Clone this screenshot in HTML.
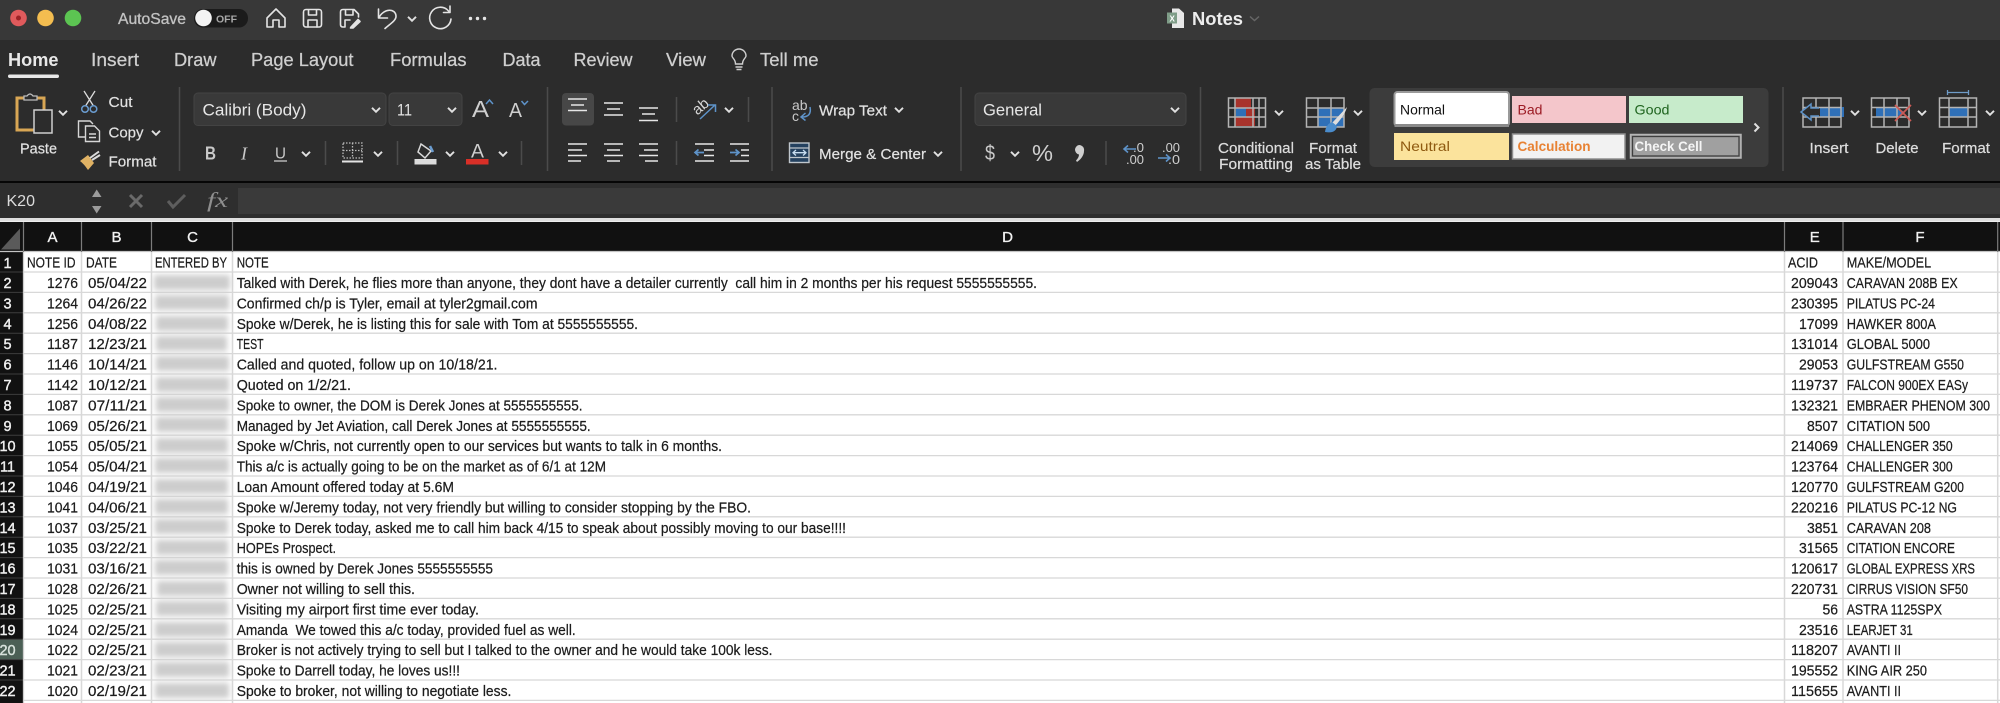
<!DOCTYPE html>
<html><head><meta charset="utf-8"><title>Notes</title>
<style>
html,body{margin:0;padding:0;width:2000px;height:703px;overflow:hidden;background:#fff}
svg{display:block;filter:blur(.35px)}
text{font-family:"Liberation Sans",sans-serif}
.t{font-size:18px;fill:#cfcfcf;stroke:#cfcfcf;stroke-width:.25px}
.r{font-size:15px;fill:#e2e2e2;stroke:#e2e2e2;stroke-width:.2px}
.c{font-size:14.5px;fill:#1c1c1c;stroke:#1c1c1c;stroke-width:.22px}
.h{font-size:15px;fill:#f2f2f2;stroke:#f2f2f2;stroke-width:.35px;text-anchor:middle}
.n{font-size:14.5px;fill:#f0f0f0;stroke:#f0f0f0;stroke-width:.4px;text-anchor:middle}
.l{stroke:#dcdcdc;stroke-width:1.5;fill:none}
.g{stroke:#b4b4b4;stroke-width:1.5;fill:none}
.s{stroke:#4b4b4b;stroke-width:1.5}
</style></head><body>
<svg xmlns="http://www.w3.org/2000/svg" width="2000" height="703" viewBox="0 0 2000 703">
<defs>
<path id="v" d="M-4 -2.2 L0 1.8 L4 -2.2" fill="none" stroke="#e0e0e0" stroke-width="1.9"/>
<filter id="bl" x="-10%" y="-10%" width="120%" height="120%"><feGaussianBlur stdDeviation="2.8"/></filter>
</defs>
<!-- chrome backgrounds -->
<rect width="2000" height="41" fill="#383838"/>
<rect y="40" width="2000" height="142" fill="#2c2c2c"/>
<rect y="181" width="2000" height="2.4" fill="#060606"/>
<rect y="183" width="2000" height="36" fill="#2e2e2e"/>
<rect x="238" y="188" width="1762" height="26" fill="#3a3a3a"/>
<rect y="218" width="2000" height="3.5" fill="#dedede"/>
<!-- traffic lights -->
<circle cx="18.500" cy="18" r="8.300" fill="#e05a5c"/><circle cx="18.500" cy="18" r="2.500" fill="#9c2226"/>
<circle cx="45.500" cy="18" r="8.300" fill="#f4bd50"/>
<circle cx="73" cy="18" r="8.300" fill="#5cc452"/>
<text x="118" y="24" font-size="15.500" fill="#c2c2c2" stroke="#c2c2c2" stroke-width=".3" textLength="68" lengthAdjust="spacingAndGlyphs">AutoSave</text>
<rect x="194" y="9" width="54" height="18.500" rx="9" fill="#1b1b1b"/>
<circle cx="203.500" cy="18" r="8.300" fill="#f4f4f4"/>
<text x="216" y="22.500" font-size="10.500" fill="#a9a9a9" font-weight="bold" textLength="21" lengthAdjust="spacingAndGlyphs">OFF</text>
<!-- QAT icons -->
<g fill="none" stroke="#e4e4e4" stroke-width="1.600" stroke-linejoin="round" stroke-linecap="round">
<path d="M267 18 L276 9 L285 18 V27 H279 V20 H273 V27 H267Z"/>
<rect x="303.500" y="9.500" width="18" height="17.500" rx="2.500"/><path d="M308.500 10 V15 H316.500 V10 M308 27 V20 H317 V27"/>
<path d="M345 27 H343 Q340.500 27 340.500 24.500 V12 Q340.500 9.500 343 9.500 H354 L358.500 14 V17 M345.500 10 V15 H353 V10 M345 27 V20 H350"/>
<path d="M351 27 L358 19.500 L360 21.500 L353 28 L350.500 28Z" fill="#e4e4e4"/>
<path d="M378.500 9 V18 H387.500 M379 17.500 C384 8 396 8 396 16.500 C396 20.500 390 24 385 28.500"/>
<path d="M448.500 11 A10.700 10.700 0 1 0 451 19 M450 6 V12.500 H443.500"/>
</g>
<use href="#v" x="412" y="19"/>
<circle cx="470.500" cy="18.500" r="1.700" fill="#e4e4e4"/><circle cx="477.500" cy="18.500" r="1.700" fill="#e4e4e4"/><circle cx="484.500" cy="18.500" r="1.700" fill="#e4e4e4"/>
<!-- title -->
<path d="M1172 8.500 H1179 L1184 13 V28 H1172Z" fill="#e8e8e8"/><rect x="1167" y="12.500" width="10" height="11" fill="#7f9d88"/>
<text x="1169.500" y="21.500" font-size="8" fill="#fff" font-weight="bold">X</text>
<text x="1192" y="25" font-size="18" fill="#ededed" font-weight="bold" textLength="51" lengthAdjust="spacingAndGlyphs">Notes</text>
<path d="M1250 16.500 L1254.500 20.500 L1259 16.500" fill="none" stroke="#666" stroke-width="1.500"/>
<!-- tabs -->
<text x="8" y="66" class="t" style="font-weight:bold;fill:#e8e8e8;stroke-width:0" textLength="50.500" lengthAdjust="spacingAndGlyphs">Home</text>
<rect x="8" y="74.500" width="51" height="3.500" rx="1.700" fill="#e8e8e8"/>
<text x="91" y="66" class="t" textLength="48" lengthAdjust="spacingAndGlyphs">Insert</text>
<text x="174" y="66" class="t" textLength="42.500" lengthAdjust="spacingAndGlyphs">Draw</text>
<text x="251" y="66" class="t" textLength="102.500" lengthAdjust="spacingAndGlyphs">Page Layout</text>
<text x="390" y="66" class="t" textLength="76.500" lengthAdjust="spacingAndGlyphs">Formulas</text>
<text x="502.500" y="66" class="t" textLength="38" lengthAdjust="spacingAndGlyphs">Data</text>
<text x="573.500" y="66" class="t" textLength="59" lengthAdjust="spacingAndGlyphs">Review</text>
<text x="666" y="66" class="t" textLength="40" lengthAdjust="spacingAndGlyphs">View</text>
<g fill="none" stroke="#cfcfcf" stroke-width="1.400"><path d="M735.500 64 C735.500 59 732 58 732 56 A7 7 0 1 1 746 56 C746 58 742.500 59 742.500 64Z"/><path d="M735.500 67 H742.500 M736.500 69.500 H741.500"/></g>
<text x="760" y="66" class="t" textLength="58.500" lengthAdjust="spacingAndGlyphs">Tell me</text>
<!-- separators -->
<g class="s"><path d="M179.500 87 V171 M547.500 87 V171 M772 87 V171 M961 87 V171 M1200.500 87 V171 M1783 87 V171"/>
<path d="M325.500 141 V165 M397.500 141 V165 M521.500 141 V165 M676.500 97 V122 M676.500 141 V165 M748.500 97 V122 M1106 141 V165"/></g>
<!-- clipboard group -->
<rect x="17" y="98" width="27" height="32" fill="none" stroke="#d8a654" stroke-width="3"/>
<path d="M24 100 V96 H27 Q30 92 33 96 H37 V100 Z" fill="#2c2c2c" stroke="#bdbdbd" stroke-width="1.300"/>
<rect x="34" y="110" width="18" height="23" fill="#2c2c2c" stroke="#cfcfcf" stroke-width="1.500"/>
<use href="#v" x="63" y="113"/>
<text x="20" y="153.500" class="r" textLength="37" lengthAdjust="spacingAndGlyphs">Paste</text>
<g fill="none" stroke="#dcdcdc" stroke-width="1.300"><path d="M84 91 L93.500 106 M95 91 L85.500 106"/></g>
<g fill="none" stroke="#6a9cd0" stroke-width="1.500"><circle cx="85" cy="109" r="3.300"/><circle cx="93.500" cy="109" r="3.300"/></g>
<text x="108.500" y="107" class="r" textLength="24" lengthAdjust="spacingAndGlyphs">Cut</text>
<g fill="none" stroke="#d6d6d6" stroke-width="1.400"><path d="M86 137 H78.500 V121 H90 L93 124"/><path d="M85.500 126 H94.500 L99.500 131 V141.500 H85.500Z"/><path d="M89 134 H96 M89 137.500 H96"/></g>
<text x="108.500" y="137.500" class="r" textLength="35" lengthAdjust="spacingAndGlyphs">Copy</text>
<use href="#v" x="156" y="133"/>
<path d="M80 161 L88 155 L94 163 L88 170 Q84 164 80 161Z" fill="#e0b264"/>
<path d="M90 158 L99 151.500 M92 160 L100 155" stroke="#dcdcdc" stroke-width="2" fill="none"/>
<text x="108.500" y="166.500" class="r" textLength="48" lengthAdjust="spacingAndGlyphs">Format</text>
<!-- font group -->
<rect x="194" y="93" width="192" height="32.500" rx="4" fill="#393939" stroke="#434343"/>
<text x="202.500" y="115.500" font-size="17" fill="#e6e6e6" textLength="104" lengthAdjust="spacingAndGlyphs">Calibri (Body)</text>
<use href="#v" x="376" y="110"/>
<rect x="389" y="93" width="73" height="32.500" rx="4" fill="#393939" stroke="#434343"/>
<text x="397" y="115.500" font-size="17" fill="#e6e6e6" textLength="15" lengthAdjust="spacingAndGlyphs">11</text>
<use href="#v" x="452" y="110"/>
<text x="472" y="117" font-size="23" fill="#cfcfcf" textLength="17" lengthAdjust="spacingAndGlyphs">A</text>
<path d="M486 104 L489.500 100 L493 104" fill="none" stroke="#5e93c9" stroke-width="1.500"/>
<text x="509" y="117" font-size="20" fill="#cfcfcf" textLength="13" lengthAdjust="spacingAndGlyphs">A</text>
<path d="M521.500 101 L524.500 104.500 L528 101" fill="none" stroke="#5e93c9" stroke-width="1.500"/>
<text x="205" y="159.500" font-size="18" font-weight="bold" fill="#c9c9c9" textLength="11" lengthAdjust="spacingAndGlyphs">B</text>
<text x="241" y="159.500" font-size="18" font-style="italic" fill="#c9c9c9" style="font-family:'Liberation Serif',serif">I</text>
<text x="275" y="158.500" font-size="16" fill="#c9c9c9" textLength="11" lengthAdjust="spacingAndGlyphs">U</text>
<path d="M274 161 H287" stroke="#c9c9c9" stroke-width="1.300"/>
<use href="#v" x="306" y="154"/>
<path d="M343 143 H362 V158 H343Z M352.500 143 V158 M343 150.500 H362" fill="none" stroke="#bbb" stroke-width="1.300" stroke-dasharray="1.500 1.500"/>
<path d="M342 161.500 H363" stroke="#e4e4e4" stroke-width="2"/>
<use href="#v" x="378" y="154"/>
<path d="M421 144 L431 151 L425 158 L418 152Z" fill="none" stroke="#d8d8d8" stroke-width="1.500"/>
<path d="M430 146 L433 152" stroke="#6a9cd0" stroke-width="2.500"/>
<rect x="414.500" y="159" width="22" height="5.500" fill="#dcdcdc"/>
<use href="#v" x="450" y="154"/>
<text x="471" y="157.500" font-size="19" fill="#cfcfcf" textLength="13" lengthAdjust="spacingAndGlyphs">A</text>
<rect x="466" y="159" width="22.500" height="5.500" fill="#d92f27"/>
<use href="#v" x="503" y="154"/>
<!-- alignment group -->
<rect x="562" y="93" width="32" height="32.500" rx="4" fill="#474747"/>
<g class="l" style="stroke:#e6e6e6;stroke-width:1.400">
<path d="M568 99 H587 M571 105 H584 M568 110.500 H587"/>
<path d="M604 103 H623 M607 109 H620 M604 115 H623"/>
<path d="M639 108 H658 M642 114 H655 M639 120.500 H658"/>
<path d="M568 144 H587 M568 150 H582 M568 155.500 H587 M568 161 H581"/>
<path d="M604 144 H623 M607 150 H620 M604 155.500 H623 M607 161 H620"/>
<path d="M639 144 H658 M644 150 H658 M639 155.500 H658 M645 161 H658"/>
<path d="M695 144 H714 M704 150 H714 M704 155.500 H714 M695 161 H714"/>
<path d="M730 144 H749 M741 150 H749 M741 155.500 H749 M730 161 H749"/>
</g>
<path d="M704 152.500 H695 M698.500 149.500 L695 152.500 L698.500 155.500" fill="none" stroke="#5e93c9" stroke-width="1.700"/>
<path d="M730 152.500 H739 M735.500 149.500 L739 152.500 L735.500 155.500" fill="none" stroke="#5e93c9" stroke-width="1.700"/>
<text x="693" y="112" font-size="15" fill="#d6d6d6" transform="rotate(-40 700 108)">ab</text>
<path d="M700 119 L715 105 M708 105 H715.500 V112" fill="none" stroke="#5e93c9" stroke-width="1.500"/>
<use href="#v" x="729" y="110"/>
<text x="792" y="110" font-size="14" fill="#c9c9c9">ab</text><text x="792" y="121" font-size="14" fill="#c9c9c9">c</text>
<path d="M810 107 Q812 117 802 117 M805.500 113 L801 117 L805.500 120.500" fill="none" stroke="#5e93c9" stroke-width="1.500"/>
<text x="819" y="115.500" class="r" textLength="68" lengthAdjust="spacingAndGlyphs">Wrap Text</text>
<use href="#v" x="899" y="110"/>
<rect x="789.500" y="143" width="19.500" height="19.500" fill="#24415f" stroke="#bfc6cc" stroke-width="1.400"/>
<path d="M790 148 H809 M790 157.500 H809" stroke="#bfc6cc" stroke-width="1.200"/>
<path d="M793 152.700 H806 M796 150 L793 152.700 L796 155.500 M803 150 L806 152.700 L803 155.500" fill="none" stroke="#c7ddf0" stroke-width="1.300"/>
<text x="819" y="159" class="r" textLength="107" lengthAdjust="spacingAndGlyphs">Merge &amp; Center</text>
<use href="#v" x="938" y="154"/>
<!-- number group -->
<rect x="975" y="93" width="211" height="32.500" rx="4" fill="#393939" stroke="#434343"/>
<text x="983" y="115.500" font-size="17" fill="#e6e6e6" textLength="59" lengthAdjust="spacingAndGlyphs">General</text>
<use href="#v" x="1175" y="110"/>
<text x="985" y="160" font-size="21" fill="#c9c9c9" textLength="10" lengthAdjust="spacingAndGlyphs">$</text>
<use href="#v" x="1015" y="154"/>
<text x="1032" y="161" font-size="23" fill="#cfcfcf" textLength="21" lengthAdjust="spacingAndGlyphs">%</text>
<path d="M1079 145 a5 5 0 0 1 5 6 c0 5 -4 9 -7 11 l-1 -1.500 c2 -2 3 -4 3 -6 a5 5 0 0 1 -4 -5 a5 5 0 0 1 4 -4.500z" fill="#cfcfcf"/>
<text x="1133" y="152" font-size="13" fill="#cfcfcf" textLength="11" lengthAdjust="spacingAndGlyphs">.0</text>
<text x="1126" y="164" font-size="13" fill="#cfcfcf" textLength="18" lengthAdjust="spacingAndGlyphs">.00</text>
<path d="M1136 149 H1124 M1128 145.500 L1124 149 L1128 152.500" fill="none" stroke="#5e93c9" stroke-width="1.600"/>
<text x="1162" y="152" font-size="13" fill="#cfcfcf" textLength="18" lengthAdjust="spacingAndGlyphs">.00</text>
<text x="1168" y="164" font-size="13" fill="#cfcfcf" textLength="12" lengthAdjust="spacingAndGlyphs">.0</text>
<path d="M1158 158 H1170 M1166 154.500 L1170 158 L1166 161.500" fill="none" stroke="#5e93c9" stroke-width="1.600"/>
<!-- conditional -->
<rect x="1235" y="98" width="16" height="10" fill="#a8332c"/><rect x="1235" y="117" width="20" height="9" fill="#a8332c"/><rect x="1246" y="108" width="9" height="9" fill="#a8332c"/><rect x="1236" y="108" width="10" height="9" fill="#2f70b8"/>
<path d="M1228.500 98 H1265.500 V127 H1228.500Z M1235 98 V127 M1253 98 V127 M1259 98 V127 M1228.500 108 H1265.500 M1228.500 117 H1265.500" class="g"/>
<use href="#v" x="1279" y="113"/>
<text x="1218" y="153" class="r" style="fill:#dcdcdc" textLength="76" lengthAdjust="spacingAndGlyphs">Conditional</text>
<text x="1219" y="169" class="r" style="fill:#dcdcdc" textLength="74" lengthAdjust="spacingAndGlyphs">Formatting</text>
<rect x="1318" y="108" width="26" height="19" fill="#2f70b8"/>
<path d="M1306.500 98 H1344 V127 H1306.500Z M1318 98 V127 M1331 98 V127 M1306.500 108 H1344 M1306.500 117 H1344" class="g"/>
<path d="M1347 107 L1332 123 L1335 126 Q1345 115 1347 107Z" fill="#ddd"/>
<path d="M1332 122 Q1326 124 1325 132 Q1336 134 1337 126Z" fill="#4a8ccc"/>
<use href="#v" x="1358" y="113"/>
<text x="1309" y="153" class="r" style="fill:#dcdcdc" textLength="48" lengthAdjust="spacingAndGlyphs">Format</text>
<text x="1305" y="169" class="r" style="fill:#dcdcdc" textLength="56" lengthAdjust="spacingAndGlyphs">as Table</text>
<!-- styles -->
<rect x="1369.500" y="88" width="399" height="79" rx="5" fill="#3c3c3c"/>
<rect x="1394.500" y="92" width="114.500" height="34" rx="3" fill="#fff" stroke="#9a9a9a" stroke-width="2"/>
<path d="M1394.500 125.500 H1509" stroke="#8a8a8a" stroke-width="3"/>
<text x="1400" y="114.500" font-size="14" fill="#111" textLength="45" lengthAdjust="spacingAndGlyphs">Normal</text>
<rect x="1512" y="96" width="114" height="27" fill="#f4c6cb"/>
<text x="1517.500" y="114.500" font-size="14" fill="#9c1c25" textLength="25" lengthAdjust="spacingAndGlyphs">Bad</text>
<rect x="1629" y="96" width="114" height="27" fill="#c7ebcb"/>
<text x="1634.500" y="114.500" font-size="14" fill="#1f641f" textLength="35" lengthAdjust="spacingAndGlyphs">Good</text>
<rect x="1394" y="133" width="115" height="27" fill="#fbe39c"/>
<text x="1400" y="151" font-size="14" fill="#8f5a10" textLength="50" lengthAdjust="spacingAndGlyphs">Neutral</text>
<rect x="1512.500" y="134" width="112.500" height="25" fill="#f2f2f2" stroke="#8f8f8f" stroke-width="1.500"/>
<text x="1517.500" y="151" font-size="14" fill="#e88233" font-weight="bold" textLength="73" lengthAdjust="spacingAndGlyphs">Calculation</text>
<rect x="1630.500" y="134.500" width="110.500" height="23.500" fill="#a0a0a0" stroke="#b5b5b5" stroke-width="1.500"/>
<rect x="1632.500" y="136.500" width="106.500" height="19.500" fill="none" stroke="#3f3f3f" stroke-width="1.300"/>
<text x="1634.500" y="151" font-size="14" fill="#f5f5f5" font-weight="bold" textLength="68" lengthAdjust="spacingAndGlyphs">Check Cell</text>
<path d="M1754.500 123.500 L1758.500 127.500 L1754.500 131.500" fill="none" stroke="#e0e0e0" stroke-width="2"/>
<!-- cells group -->
<rect x="1820" y="107" width="24" height="10" fill="#2f70b8"/>
<path d="M1803 98 H1841 V127 H1803Z M1816 98 V127 M1829 98 V127 M1803 107.500 H1841 M1803 117 H1841" class="g"/>
<path d="M1819 108 H1811 V104 L1801 112 L1811 120 V116 H1819" fill="#2c2c2c" stroke="#5e93c9" stroke-width="1.500"/>
<use href="#v" x="1855" y="113"/>
<text x="1809.500" y="153" class="r" style="fill:#dcdcdc" textLength="39" lengthAdjust="spacingAndGlyphs">Insert</text>
<rect x="1876" y="107" width="22" height="10" fill="#2f70b8"/><path d="M1897 107 L1904 112 L1897 117Z" fill="#2f70b8"/>
<path d="M1871.500 98 H1909 V127 H1871.500Z M1884 98 V127 M1897 98 V127 M1871.500 107.500 H1909 M1871.500 117 H1909" class="g"/>
<path d="M1895 105 L1911 121 M1911 105 L1895 121" stroke="#cc5a55" stroke-width="1.700"/>
<use href="#v" x="1922" y="113"/>
<text x="1875.500" y="153" class="r" style="fill:#dcdcdc" textLength="43" lengthAdjust="spacingAndGlyphs">Delete</text>
<rect x="1949" y="107.500" width="19" height="9.500" fill="#2f70b8"/>
<path d="M1939.500 98 H1976.500 V127 H1939.500Z M1949 98 V127 M1968 98 V127 M1939.500 107.500 H1976.500 M1939.500 117 H1976.500" class="g"/>
<path d="M1947.500 92.500 H1968.500 M1947.500 90 V95 M1968.500 90 V95" stroke="#6f9cc8" stroke-width="1.300" fill="none"/>
<use href="#v" x="1990" y="113"/>
<text x="1942" y="153" class="r" style="fill:#dcdcdc" textLength="48" lengthAdjust="spacingAndGlyphs">Format</text>
<!-- formula bar -->
<text x="6.500" y="206" font-size="16" fill="#dcdcdc" textLength="28.500" lengthAdjust="spacingAndGlyphs">K20</text>
<path d="M92 197 H101.500 L96.700 189.500Z M92 206 H101.500 L96.700 213.500Z" fill="#9b9b9b"/>
<path d="M130 195 L142 207 M142 195 L130 207" stroke="#6a6a6a" stroke-width="3"/>
<path d="M168 201 L173 207 L185 195" fill="none" stroke="#5e5e5e" stroke-width="3"/>
<text x="207" y="207" font-size="21" fill="#8e8e8e" font-style="italic" style="font-family:'Liberation Serif',serif" textLength="21" lengthAdjust="spacingAndGlyphs">fx</text>
<!-- sheet -->
<rect y="221.500" width="2000" height="481.500" fill="#fff"/>
<rect y="222" width="2000" height="29.500" fill="#111"/>
<rect y="222" width="23.500" height="481" fill="#111"/>
<path d="M20 228.500 V249.500 H1Z" fill="#5a5a5a"/>
<rect y="639.500" width="23.500" height="20.500" fill="#4b5f55"/>
<path d="M0 251.500 H2000" stroke="#c4c4c4" stroke-width="1.300"/>
<g stroke="#7c7c7c" stroke-width="1.200"><path d="M23.500 222 V252 M81.500 222 V252 M151.500 222 V252 M232.500 222 V252 M1784.500 222 V252 M1843 222 V252 M1997.700 222 V252"/></g>
<g stroke="#d8d8d8" stroke-width="1.300">
<path d="M24 272 H2000 M24 292.400 H2000 M24 312.800 H2000 M24 333.200 H2000 M24 353.600 H2000 M24 374 H2000 M24 394.400 H2000 M24 414.800 H2000 M24 435.200 H2000 M24 455.600 H2000 M24 476 H2000 M24 496.400 H2000 M24 516.800 H2000 M24 537.200 H2000 M24 557.600 H2000 M24 578 H2000 M24 598.400 H2000 M24 618.800 H2000 M24 639.200 H2000 M24 659.600 H2000 M24 680 H2000 M24 700.400 H2000"/>
<path d="M81.500 252 V703 M151.500 252 V703 M232.500 252 V703 M1784.500 252 V703 M1843 252 V703 M1997.700 252 V703" stroke-width="1.500"/>
</g>
<path d="M0 272 H23 M0 292.400 H23 M0 312.800 H23 M0 333.200 H23 M0 353.600 H23 M0 374 H23 M0 394.400 H23 M0 414.800 H23 M0 435.200 H23 M0 455.600 H23 M0 476 H23 M0 496.400 H23 M0 516.800 H23 M0 537.200 H23 M0 557.600 H23 M0 578 H23 M0 598.400 H23 M0 618.800 H23 M0 639.200 H23 M0 659.600 H23 M0 680 H23" stroke="#3d3d3d" stroke-width="1"/>
<path d="M23.500 252 V703" stroke="#cfcfcf" stroke-width="1.300"/>
<!-- redacted -->
<g fill="#cccccc" filter="url(#bl)">
<rect x="154" y="275" width="76" height="15"/><rect x="155" y="295" width="74" height="15"/><rect x="156" y="316" width="72" height="15"/><rect x="156" y="336" width="71" height="15"/><rect x="156" y="356" width="73" height="15"/><rect x="156" y="377" width="73" height="15"/><rect x="156" y="397" width="73" height="15"/><rect x="156" y="417" width="72" height="15"/><rect x="156" y="438" width="72" height="15"/>
<rect x="155" y="458" width="74" height="15"/><rect x="155" y="479" width="73" height="15"/><rect x="155" y="499" width="73" height="15"/><rect x="155" y="519" width="73" height="15"/><rect x="156" y="540" width="72" height="15"/><rect x="155" y="560" width="73" height="15"/><rect x="157" y="581" width="70" height="15"/><rect x="156" y="601" width="72" height="15"/><rect x="155" y="622" width="73" height="15"/><rect x="155" y="642" width="73" height="15"/><rect x="155" y="662" width="74" height="15"/><rect x="155" y="683" width="74" height="15"/>
</g>
<!-- column letters -->
<g class="h">
<text x="52.500" y="242">A</text><text x="116.500" y="242">B</text><text x="192.500" y="242">C</text><text x="1007.500" y="242">D</text><text x="1814.700" y="242">E</text><text x="1920" y="242">F</text>
</g>
<!-- row numbers -->
<g class="n">
<text x="7.500" y="268">1</text><text x="7.500" y="288">2</text><text x="7.500" y="308.400">3</text><text x="7.500" y="328.800">4</text><text x="7.500" y="349.200">5</text><text x="7.500" y="369.600">6</text><text x="7.500" y="390">7</text><text x="7.500" y="410.400">8</text><text x="7.500" y="430.800">9</text><text x="7.500" y="451.200">10</text><text x="7.500" y="471.600">11</text><text x="7.500" y="492">12</text><text x="7.500" y="512.400">13</text><text x="7.500" y="532.800">14</text><text x="7.500" y="553.200">15</text><text x="7.500" y="573.600">16</text><text x="7.500" y="594">17</text><text x="7.500" y="614.400">18</text><text x="7.500" y="634.800">19</text><text x="7.500" y="655.200" style="fill:#d8e2dc;stroke:#d8e2dc">20</text><text x="7.500" y="675.600">21</text><text x="7.500" y="696">22</text>
</g>
<!-- cells -->
<g class="c">
<g transform="translate(0,267.600)"><text x="27" textLength="48.500" lengthAdjust="spacingAndGlyphs">NOTE ID</text><text x="86" textLength="31" lengthAdjust="spacingAndGlyphs">DATE</text><text x="155" textLength="72" lengthAdjust="spacingAndGlyphs">ENTERED BY</text><text x="236.700" textLength="32" lengthAdjust="spacingAndGlyphs">NOTE</text><text x="1788" textLength="30" lengthAdjust="spacingAndGlyphs">ACID</text><text x="1846.700" textLength="84.500" lengthAdjust="spacingAndGlyphs">MAKE/MODEL</text></g>
<g transform="translate(0,288)"><text x="47" textLength="31" lengthAdjust="spacingAndGlyphs">1276</text><text x="88" textLength="59" lengthAdjust="spacingAndGlyphs">05/04/22</text><text x="236.700" textLength="800.300" lengthAdjust="spacingAndGlyphs">Talked with Derek, he flies more than anyone, they dont have a detailer currently &#160;call him in 2 months per his request 5555555555.</text><text x="1791" textLength="47" lengthAdjust="spacingAndGlyphs">209043</text><text x="1846.700" textLength="111" lengthAdjust="spacingAndGlyphs">CARAVAN 208B EX</text></g>
<g transform="translate(0,308.400)"><text x="47" textLength="31" lengthAdjust="spacingAndGlyphs">1264</text><text x="88" textLength="59" lengthAdjust="spacingAndGlyphs">04/26/22</text><text x="236.700" textLength="300.800" lengthAdjust="spacingAndGlyphs">Confirmed ch/p is Tyler, email at tyler2gmail.com</text><text x="1791" textLength="47" lengthAdjust="spacingAndGlyphs">230395</text><text x="1846.700" textLength="88.300" lengthAdjust="spacingAndGlyphs">PILATUS PC-24</text></g>
<g transform="translate(0,328.800)"><text x="47" textLength="31" lengthAdjust="spacingAndGlyphs">1256</text><text x="88" textLength="59" lengthAdjust="spacingAndGlyphs">04/08/22</text><text x="236.700" textLength="401.300" lengthAdjust="spacingAndGlyphs">Spoke w/Derek, he is listing this for sale with Tom at 5555555555.</text><text x="1799" textLength="39" lengthAdjust="spacingAndGlyphs">17099</text><text x="1846.700" textLength="89.300" lengthAdjust="spacingAndGlyphs">HAWKER 800A</text></g>
<g transform="translate(0,349.200)"><text x="47" textLength="31" lengthAdjust="spacingAndGlyphs">1187</text><text x="88" textLength="59" lengthAdjust="spacingAndGlyphs">12/23/21</text><text x="236.700" textLength="26.800" lengthAdjust="spacingAndGlyphs">TEST</text><text x="1791" textLength="47" lengthAdjust="spacingAndGlyphs">131014</text><text x="1846.700" textLength="83.300" lengthAdjust="spacingAndGlyphs">GLOBAL 5000</text></g>
<g transform="translate(0,369.600)"><text x="47" textLength="31" lengthAdjust="spacingAndGlyphs">1146</text><text x="88" textLength="59" lengthAdjust="spacingAndGlyphs">10/14/21</text><text x="236.700" textLength="260.800" lengthAdjust="spacingAndGlyphs">Called and quoted, follow up on 10/18/21.</text><text x="1799" textLength="39" lengthAdjust="spacingAndGlyphs">29053</text><text x="1846.700" textLength="117.300" lengthAdjust="spacingAndGlyphs">GULFSTREAM G550</text></g>
<g transform="translate(0,390)"><text x="47" textLength="31" lengthAdjust="spacingAndGlyphs">1142</text><text x="88" textLength="59" lengthAdjust="spacingAndGlyphs">10/12/21</text><text x="236.700" textLength="114.300" lengthAdjust="spacingAndGlyphs">Quoted on 1/2/21.</text><text x="1791" textLength="47" lengthAdjust="spacingAndGlyphs">119737</text><text x="1846.700" textLength="121.300" lengthAdjust="spacingAndGlyphs">FALCON 900EX EASy</text></g>
<g transform="translate(0,410.400)"><text x="47" textLength="31" lengthAdjust="spacingAndGlyphs">1087</text><text x="88" textLength="59" lengthAdjust="spacingAndGlyphs">07/11/21</text><text x="236.700" textLength="345.800" lengthAdjust="spacingAndGlyphs">Spoke to owner, the DOM is Derek Jones at 5555555555.</text><text x="1791" textLength="47" lengthAdjust="spacingAndGlyphs">132321</text><text x="1846.700" textLength="143.300" lengthAdjust="spacingAndGlyphs">EMBRAER PHENOM 300</text></g>
<g transform="translate(0,430.800)"><text x="47" textLength="31" lengthAdjust="spacingAndGlyphs">1069</text><text x="88" textLength="59" lengthAdjust="spacingAndGlyphs">05/26/21</text><text x="236.700" textLength="354" lengthAdjust="spacingAndGlyphs">Managed by Jet Aviation, call Derek Jones at 5555555555.</text><text x="1807" textLength="31" lengthAdjust="spacingAndGlyphs">8507</text><text x="1846.700" textLength="83.300" lengthAdjust="spacingAndGlyphs">CITATION 500</text></g>
<g transform="translate(0,451.200)"><text x="47" textLength="31" lengthAdjust="spacingAndGlyphs">1055</text><text x="88" textLength="59" lengthAdjust="spacingAndGlyphs">05/05/21</text><text x="236.700" textLength="485.300" lengthAdjust="spacingAndGlyphs">Spoke w/Chris, not currently open to our services but wants to talk in 6 months.</text><text x="1791" textLength="47" lengthAdjust="spacingAndGlyphs">214069</text><text x="1846.700" textLength="106" lengthAdjust="spacingAndGlyphs">CHALLENGER 350</text></g>
<g transform="translate(0,471.600)"><text x="47" textLength="31" lengthAdjust="spacingAndGlyphs">1054</text><text x="88" textLength="59" lengthAdjust="spacingAndGlyphs">05/04/21</text><text x="236.700" textLength="369.300" lengthAdjust="spacingAndGlyphs">This a/c is actually going to be on the market as of 6/1 at 12M</text><text x="1791" textLength="47" lengthAdjust="spacingAndGlyphs">123764</text><text x="1846.700" textLength="106" lengthAdjust="spacingAndGlyphs">CHALLENGER 300</text></g>
<g transform="translate(0,492)"><text x="47" textLength="31" lengthAdjust="spacingAndGlyphs">1046</text><text x="88" textLength="59" lengthAdjust="spacingAndGlyphs">04/19/21</text><text x="236.700" textLength="217.300" lengthAdjust="spacingAndGlyphs">Loan Amount offered today at 5.6M</text><text x="1791" textLength="47" lengthAdjust="spacingAndGlyphs">120770</text><text x="1846.700" textLength="117.300" lengthAdjust="spacingAndGlyphs">GULFSTREAM G200</text></g>
<g transform="translate(0,512.400)"><text x="47" textLength="31" lengthAdjust="spacingAndGlyphs">1041</text><text x="88" textLength="59" lengthAdjust="spacingAndGlyphs">04/06/21</text><text x="236.700" textLength="514.300" lengthAdjust="spacingAndGlyphs">Spoke w/Jeremy today, not very friendly but willing to consider stopping by the FBO.</text><text x="1791" textLength="47" lengthAdjust="spacingAndGlyphs">220216</text><text x="1846.700" textLength="110.300" lengthAdjust="spacingAndGlyphs">PILATUS PC-12 NG</text></g>
<g transform="translate(0,532.800)"><text x="47" textLength="31" lengthAdjust="spacingAndGlyphs">1037</text><text x="88" textLength="59" lengthAdjust="spacingAndGlyphs">03/25/21</text><text x="236.700" textLength="609.300" lengthAdjust="spacingAndGlyphs">Spoke to Derek today, asked me to call him back 4/15 to speak about possibly moving to our base!!!!</text><text x="1807" textLength="31" lengthAdjust="spacingAndGlyphs">3851</text><text x="1846.700" textLength="84.300" lengthAdjust="spacingAndGlyphs">CARAVAN 208</text></g>
<g transform="translate(0,553.200)"><text x="47" textLength="31" lengthAdjust="spacingAndGlyphs">1035</text><text x="88" textLength="59" lengthAdjust="spacingAndGlyphs">03/22/21</text><text x="236.700" textLength="99.300" lengthAdjust="spacingAndGlyphs">HOPEs Prospect.</text><text x="1799" textLength="39" lengthAdjust="spacingAndGlyphs">31565</text><text x="1846.700" textLength="108.300" lengthAdjust="spacingAndGlyphs">CITATION ENCORE</text></g>
<g transform="translate(0,573.600)"><text x="47" textLength="31" lengthAdjust="spacingAndGlyphs">1031</text><text x="88" textLength="59" lengthAdjust="spacingAndGlyphs">03/16/21</text><text x="236.700" textLength="256.300" lengthAdjust="spacingAndGlyphs">this is owned by Derek Jones 5555555555</text><text x="1791" textLength="47" lengthAdjust="spacingAndGlyphs">120617</text><text x="1846.700" textLength="128.300" lengthAdjust="spacingAndGlyphs">GLOBAL EXPRESS XRS</text></g>
<g transform="translate(0,594)"><text x="47" textLength="31" lengthAdjust="spacingAndGlyphs">1028</text><text x="88" textLength="59" lengthAdjust="spacingAndGlyphs">02/26/21</text><text x="236.700" textLength="178.300" lengthAdjust="spacingAndGlyphs">Owner not willing to sell this.</text><text x="1791" textLength="47" lengthAdjust="spacingAndGlyphs">220731</text><text x="1846.700" textLength="121.300" lengthAdjust="spacingAndGlyphs">CIRRUS VISION SF50</text></g>
<g transform="translate(0,614.400)"><text x="47" textLength="31" lengthAdjust="spacingAndGlyphs">1025</text><text x="88" textLength="59" lengthAdjust="spacingAndGlyphs">02/25/21</text><text x="236.700" textLength="242.300" lengthAdjust="spacingAndGlyphs">Visiting my airport first time ever today.</text><text x="1822.500" textLength="15.500" lengthAdjust="spacingAndGlyphs">56</text><text x="1846.700" textLength="95.300" lengthAdjust="spacingAndGlyphs">ASTRA 1125SPX</text></g>
<g transform="translate(0,634.800)"><text x="47" textLength="31" lengthAdjust="spacingAndGlyphs">1024</text><text x="88" textLength="59" lengthAdjust="spacingAndGlyphs">02/25/21</text><text x="236.700" textLength="339" lengthAdjust="spacingAndGlyphs">Amanda &#160;We towed this a/c today, provided fuel as well.</text><text x="1799" textLength="39" lengthAdjust="spacingAndGlyphs">23516</text><text x="1846.700" textLength="66" lengthAdjust="spacingAndGlyphs">LEARJET 31</text></g>
<g transform="translate(0,655.200)"><text x="47" textLength="31" lengthAdjust="spacingAndGlyphs">1022</text><text x="88" textLength="59" lengthAdjust="spacingAndGlyphs">02/25/21</text><text x="236.700" textLength="535.800" lengthAdjust="spacingAndGlyphs">Broker is not actively trying to sell but I talked to the owner and he would take 100k less.</text><text x="1791" textLength="47" lengthAdjust="spacingAndGlyphs">118207</text><text x="1846.700" textLength="54.300" lengthAdjust="spacingAndGlyphs">AVANTI II</text></g>
<g transform="translate(0,675.600)"><text x="47" textLength="31" lengthAdjust="spacingAndGlyphs">1021</text><text x="88" textLength="59" lengthAdjust="spacingAndGlyphs">02/23/21</text><text x="236.700" textLength="223.300" lengthAdjust="spacingAndGlyphs">Spoke to Darrell today, he loves us!!!</text><text x="1791" textLength="47" lengthAdjust="spacingAndGlyphs">195552</text><text x="1846.700" textLength="80.300" lengthAdjust="spacingAndGlyphs">KING AIR 250</text></g>
<g transform="translate(0,696)"><text x="47" textLength="31" lengthAdjust="spacingAndGlyphs">1020</text><text x="88" textLength="59" lengthAdjust="spacingAndGlyphs">02/19/21</text><text x="236.700" textLength="274.700" lengthAdjust="spacingAndGlyphs">Spoke to broker, not willing to negotiate less.</text><text x="1791" textLength="47" lengthAdjust="spacingAndGlyphs">115655</text><text x="1846.700" textLength="54.300" lengthAdjust="spacingAndGlyphs">AVANTI II</text></g>
</g>
</svg>
</body></html>
